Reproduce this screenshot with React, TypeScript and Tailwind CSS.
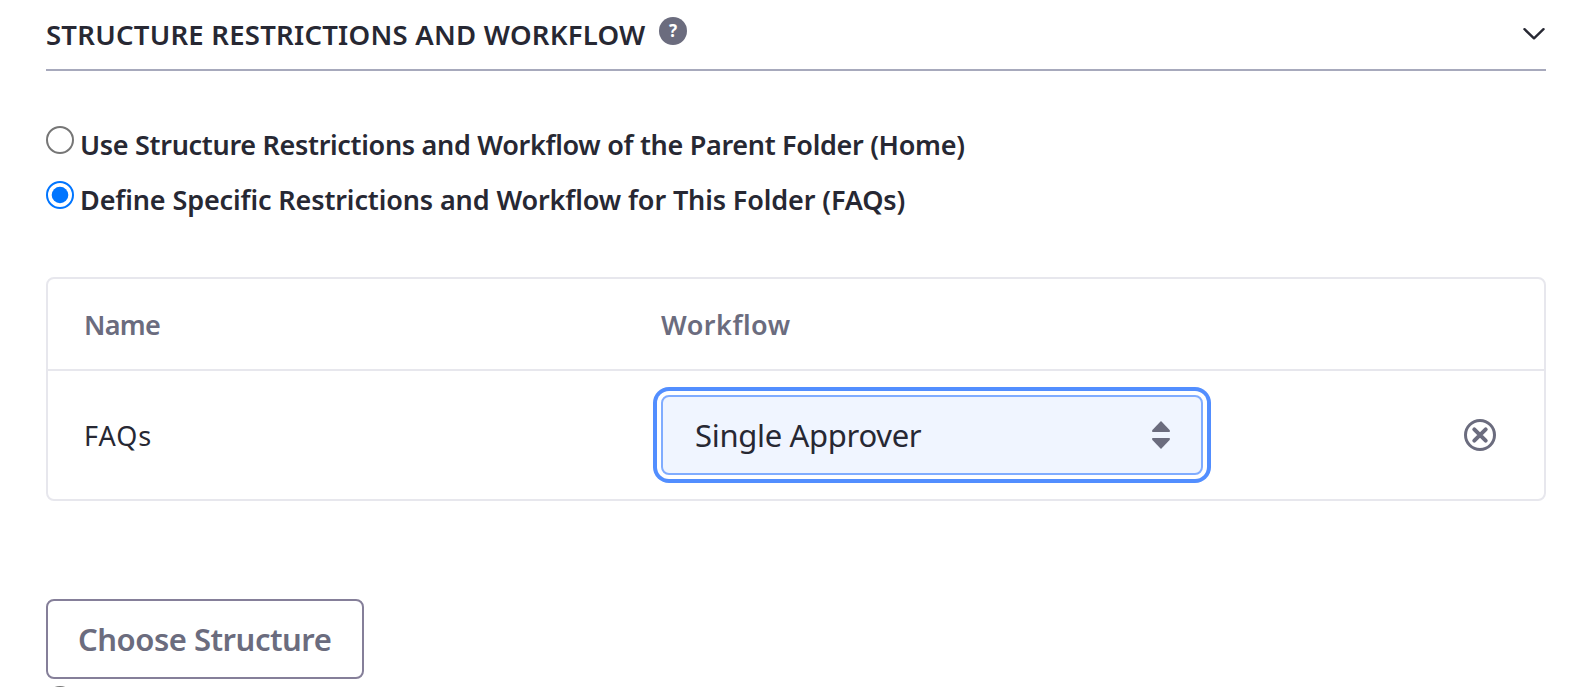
import React from "react";

function Radio({ checked = false }: { checked?: boolean }) {
  return (
    <svg className="size-7 shrink-0" viewBox="0 0 28 28" fill="none">
      <circle cx="14" cy="14" r="13" fill="white" stroke={checked ? "#0075ff" : "#767676"} strokeWidth="2" />
      {checked && <circle cx="14" cy="14" r="8.3" fill="#0075ff" />}
    </svg>
  );
}

export default function App() {
  return (
    <main className="flex h-[687px] w-full flex-col items-start overflow-hidden bg-white pl-[46px] pr-[27px] font-['Noto_Sans',sans-serif] text-[27px] leading-10 text-[#272833]">
      <header className="flex h-[71px] w-full shrink-0 items-start border-b-2 border-[#a7a9bc]">
        <h2 className="mt-[15px] w-[599px] whitespace-nowrap text-[27.5px] font-semibold tracking-[0.24px]">STRUCTURE RESTRICTIONS AND WORKFLOW</h2>
        <span className="ml-3.5 mt-[17px] flex size-7 items-center justify-center rounded-full bg-[#6b6c7e] text-[17px] font-bold leading-7 text-white">?</span>
        <svg className="ml-auto mr-px mt-[27px] h-[14px] w-[22px]" viewBox="0 0 22 14" fill="none" stroke="#272833" strokeWidth="2.4" strokeLinecap="round" strokeLinejoin="round">
          <path d="M1.5 2.2 L11 11.3 L20.5 2.2" />
        </svg>
      </header>

      <div className="mt-[55px] flex h-[55px] shrink-0 items-start">
        <Radio />
        <span className="ml-1.5 mt-[-1px] whitespace-nowrap font-semibold tracking-[-0.31px]">Use Structure Restrictions and Workflow of the Parent Folder (Home)</span>
      </div>
      <div className="flex h-[55px] shrink-0 items-start">
        <Radio checked />
        <span className="ml-1.5 mt-[-1px] whitespace-nowrap font-semibold tracking-[-0.12px]">Define Specific Restrictions and Workflow for This Folder (FAQs)</span>
      </div>

      <section className="mt-[41px] h-56 w-full shrink-0 rounded-lg border-2 border-[#e7e7ed]">
        <div className="grid h-[92px] grid-cols-[577px_1fr] items-center border-b-2 border-[#e7e7ed] pl-9 font-semibold text-[#6b6c7e]">
          <span className="pt-px tracking-[-0.7px]">Name</span>
          <span className="pt-px tracking-[0.5px]">Workflow</span>
        </div>
        <div className="flex h-32 items-center pl-9 pr-12">
          <span className="w-[577px] pt-px tracking-[1px]">FAQs</span>
          <div className="flex h-20 w-[542px] items-center justify-between rounded-lg border-2 border-[#80acff] bg-[#f0f5ff] pl-8 pr-[31px] text-[31px] shadow-[0_0_0_4px_#fff,0_0_0_8px_#528eff]">
            <span className="whitespace-nowrap tracking-[-0.32px]">Single Approver</span>
            <svg className="h-7 w-[18px]" viewBox="0 0 18 28" fill="#6b6c7e">
              <path d="M9 0 L17.6 9 Q18.6 11 17 11 H1 Q-.6 11 .4 9Z" />
              <path d="M9 28 L17.6 19 Q18.6 17 17 17 H1 Q-.6 17 .4 19Z" />
            </svg>
          </div>
          <svg className="ml-auto size-8" viewBox="0 0 32 32" fill="none" stroke="#6b6c7e">
            <circle cx="16" cy="16" r="14.5" strokeWidth="3" />
            <path d="M10.3 10.3 L21.7 21.7 M21.7 10.3 L10.3 21.7" strokeWidth="4" strokeLinecap="round" />
          </svg>
        </div>
      </section>

      <button className="mt-[98px] flex h-20 w-[318px] shrink-0 items-center rounded-lg border-2 border-[#857f99] pl-[30px] text-[31px] font-semibold text-[#6b6c7e]">
        <span className="whitespace-nowrap tracking-[-0.48px]">Choose Structure</span>
      </button>
      <div className="mt-[7px] flex shrink-0">
        <Radio />
      </div>
    </main>
  );
}
